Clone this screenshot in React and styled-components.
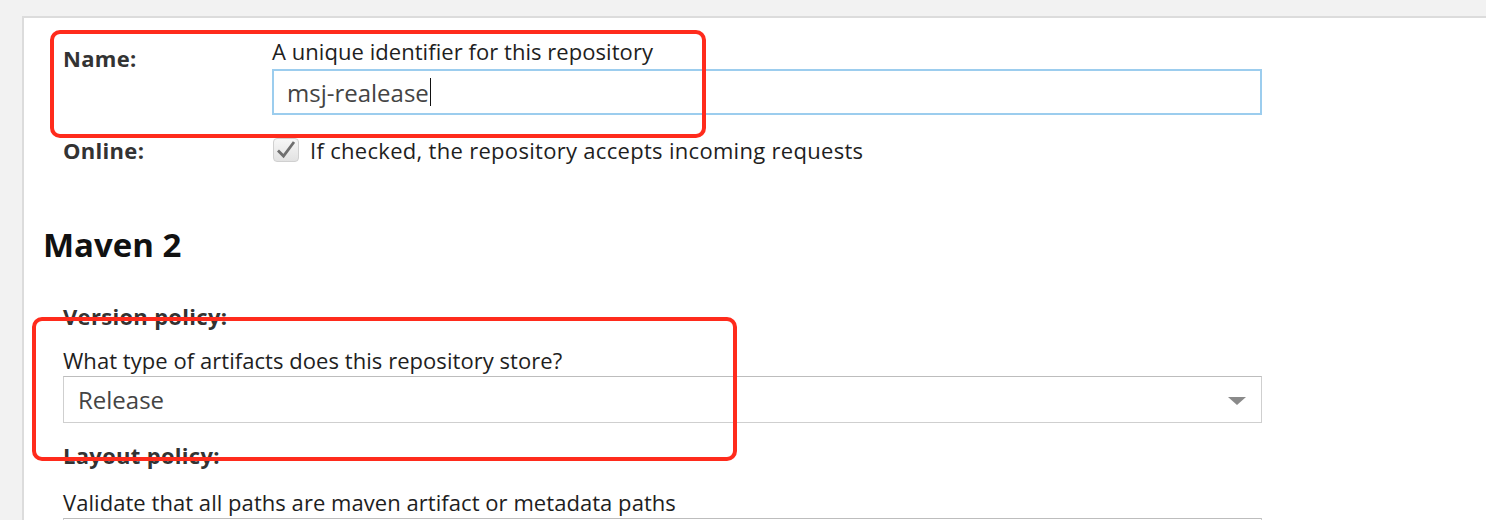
import React from "react";
import styled, { createGlobalStyle } from "styled-components";

const GlobalStyle = createGlobalStyle`
    body {
        margin: 0;
        background: #f2f2f2;
        font-family: "Open Sans", "Liberation Sans", sans-serif;
        overflow: hidden;
    }
`;

function App() {
    return (
        <Page>
            <GlobalStyle />
            <Panel>
                <FieldRow>
                    <Label>Name:</Label>
                    <Field>
                        <Help>A unique identifier for this repository</Help>
                        <TextBox>
                            msj-realease
                            <Caret />
                        </TextBox>
                    </Field>
                </FieldRow>
                <OnlineRow>
                    <Label>Online:</Label>
                    <CheckLine>
                        <CheckBox>
                            <svg width="22" height="20" viewBox="0 0 22 20">
                                <path
                                    d="M3 10.5 L8.5 16 L19 2"
                                    fill="none"
                                    stroke="#6f6f6f"
                                    strokeWidth="2.8"
                                />
                            </svg>
                        </CheckBox>
                        <Help wide>If checked, the repository accepts incoming requests</Help>
                    </CheckLine>
                </OnlineRow>

                <Heading>Maven 2</Heading>

                <Block>
                    <Label>Version policy:</Label>
                    <Help gap="20px">What type of artifacts does this repository store?</Help>
                    <Select>
                        Release
                        <Arrow />
                    </Select>
                </Block>
                <Block gap="20px">
                    <Label>Layout policy:</Label>
                    <Help gap="23px">Validate that all paths are maven artifact or metadata paths</Help>
                    <Select />
                </Block>

                <Marker style={{ left: 26, top: 12, width: 656, height: 108 }} />
                <Marker style={{ left: 8, top: 299, width: 705, height: 144 }} />
            </Panel>
        </Page>
    );
}

export default App;

const Page = styled.div`
    height: 520px;
    box-sizing: border-box;
    padding: 16px 0 0 22px;
    overflow: hidden;
`;

const Panel = styled.div`
    position: relative;
    height: 100%;
    box-sizing: border-box;
    background: #fff;
    border-top: 2px solid #dcdcdc;
    border-left: 2px solid #dcdcdc;
    padding: 21px 0 0 39px;
    overflow: hidden;
`;

const FieldRow = styled.div`
    display: grid;
    grid-template-columns: 209px 990px;
`;

const OnlineRow = styled(FieldRow)`
    margin-top: 23px;
    align-items: center;
`;

const Label = styled.div`
    font-size: 22px;
    line-height: 24px;
    font-weight: 700;
    letter-spacing: 0.3px;
    color: #333;
    ${FieldRow} > & {
        padding-top: 7px;
    }
    ${OnlineRow} > & {
        padding-top: 0;
    }
`;

const Field = styled.div`
    display: flex;
    flex-direction: column;
`;

const Help = styled.div`
    font-size: 22px;
    line-height: 24px;
    letter-spacing: ${p => (p.wide ? "0.3px" : "0.05px")};
    color: #1e1e1e;
    white-space: nowrap;
    margin-top: ${p => p.gap || "0"};
`;

const TextBox = styled.div`
    margin-top: 6px;
    height: 46px;
    box-sizing: border-box;
    border: 2px solid #9ccdee;
    padding: 0 13px;
    display: flex;
    align-items: center;
    font-size: 24px;
    color: #444;
`;

const Caret = styled.span`
    display: inline-block;
    width: 1px;
    height: 28px;
    background: #111;
    margin-left: 1px;
`;

const CheckLine = styled.div`
    display: flex;
    align-items: center;
    gap: 11px;
    margin-left: 1px;
`;

const CheckBox = styled.div`
    width: 26px;
    height: 24px;
    box-sizing: border-box;
    border: 1px solid #d0d0d0;
    border-radius: 4px;
    background: linear-gradient(#f7f7f7, #e2e2e2);
    display: flex;
    align-items: center;
    justify-content: center;
`;

const Heading = styled.h2`
    margin: 65px 0 0 -20px;
    font-size: 33px;
    line-height: 36px;
    font-weight: 700;
    color: #111;
`;

const Block = styled.div`
    margin-top: ${p => p.gap || "41px"};
    width: 1199px;
    margin-left: -1px;
    padding-left: 1px;
`;

const Select = styled.div`
    position: relative;
    margin-top: 4px;
    height: 47px;
    box-sizing: border-box;
    border: 1px solid #cfcfcf;
    border-top-color: #bdbdbd;
    display: flex;
    align-items: center;
    padding: 0 14px;
    font-size: 24px;
    color: #444;
`;

const Arrow = styled.span`
    position: absolute;
    right: 15px;
    top: 20px;
    width: 0;
    height: 0;
    border-left: 9px solid transparent;
    border-right: 9px solid transparent;
    border-top: 8px solid #8a8a8a;
`;

const Marker = styled.div`
    position: absolute;
    box-sizing: border-box;
    border: 4px solid #ff2b1c;
    border-radius: 10px;
    pointer-events: none;
`;
